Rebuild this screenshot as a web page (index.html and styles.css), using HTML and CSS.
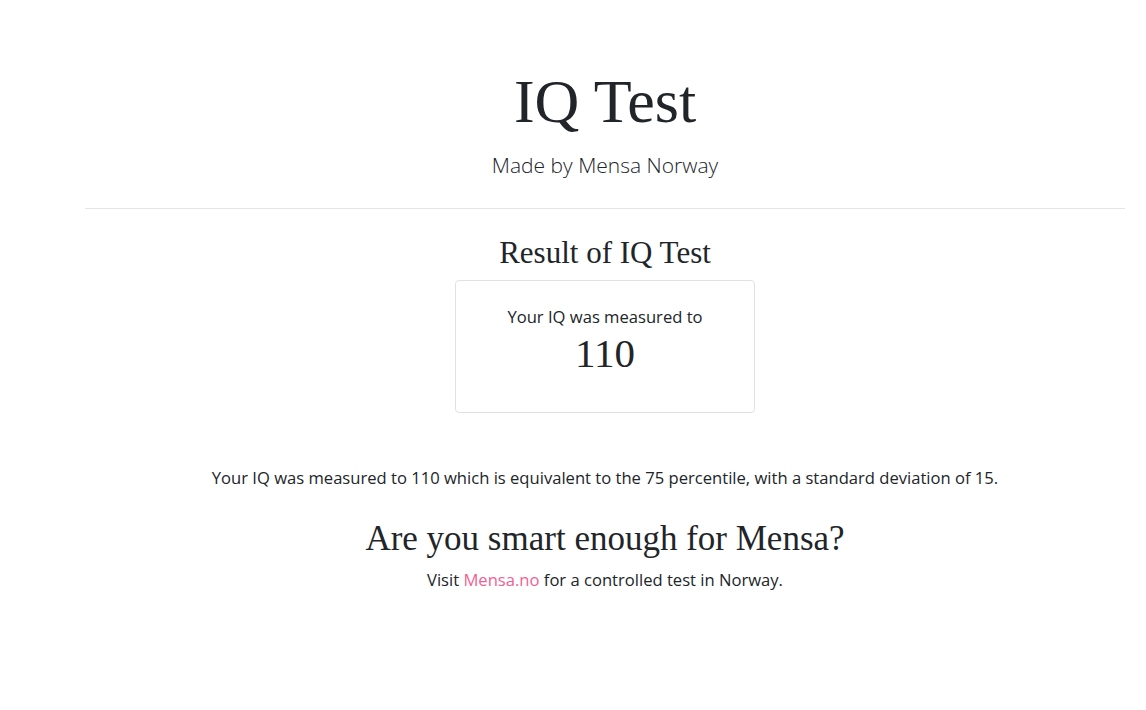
FILE: index.html
```html
<!DOCTYPE html>
<html lang="en">
<head>
<meta charset="utf-8">
<title>IQ Test</title>
<link rel="stylesheet" href="styles.css">
</head>
<body>
<div class="page">
  <header class="header">
    <h1 class="title">IQ Test</h1>
    <p class="subtitle">Made by Mensa Norway</p>
  </header>
  <hr class="divider">
  <section class="result">
    <h3 class="result-title">Result of IQ Test</h3>
    <div class="card">
      <p class="card-label">Your IQ was measured to</p>
      <p class="card-score">110</p>
    </div>
    <p class="summary">Your IQ was measured to 110 which is equivalent to the 75 percentile, with a standard deviation of 15.</p>
    <h2 class="cta-title">Are you smart enough for Mensa?</h2>
    <p class="cta-text">Visit <a class="link" href="#">Mensa.no</a> for a controlled test in Norway.</p>
  </section>
</div>
</body>
</html>
```

FILE: styles.css
```css
html, body {
  margin: 0;
  padding: 0;
  background: #ffffff;
}
body {
  font-family: "Open Sans", "Noto Sans", sans-serif;
  color: #212529;
  font-size: 16.6px;
  line-height: 24px;
}
.page {
  margin-left: 85px;
  width: 1040px;
  text-align: center;
}
.header {
  padding-top: 64px;
}
.title {
  font-family: "Liberation Serif", "Times New Roman", serif;
  font-weight: 400;
  font-size: 62px;
  line-height: 1.2;
  margin: 0;
}
.subtitle {
  font-weight: 300;
  font-size: 21px;
  line-height: 30px;
  margin: 12px 0 0;
}
.divider {
  border: 0;
  border-top: 1px solid #e5e5e5;
  margin: 28px 0 0;
}
.result {
  display: flex;
  flex-direction: column;
  align-items: center;
}
.result-title {
  font-family: "Liberation Serif", "Times New Roman", serif;
  font-weight: 400;
  font-size: 31px;
  line-height: 36px;
  margin: 26px 0 0;
}
.card {
  width: 298px;
  border: 1px solid #dee2e6;
  border-radius: 4px;
  margin-top: 9px;
  padding: 24px 0 35px;
}
.card-label {
  margin: 0;
}
.card-score {
  margin: 0;
  font-family: "Liberation Serif", "Times New Roman", serif;
  font-size: 41px;
  line-height: 48px;
}
.summary {
  margin: 53px 0 0;
}
.cta-title {
  font-family: "Liberation Serif", "Times New Roman", serif;
  font-weight: 400;
  font-size: 35px;
  line-height: 42px;
  margin: 28px 0 0;
}
.cta-text {
  margin: 8px 0 0;
}
.link {
  color: #f06292;
  text-decoration: none;
}
```
